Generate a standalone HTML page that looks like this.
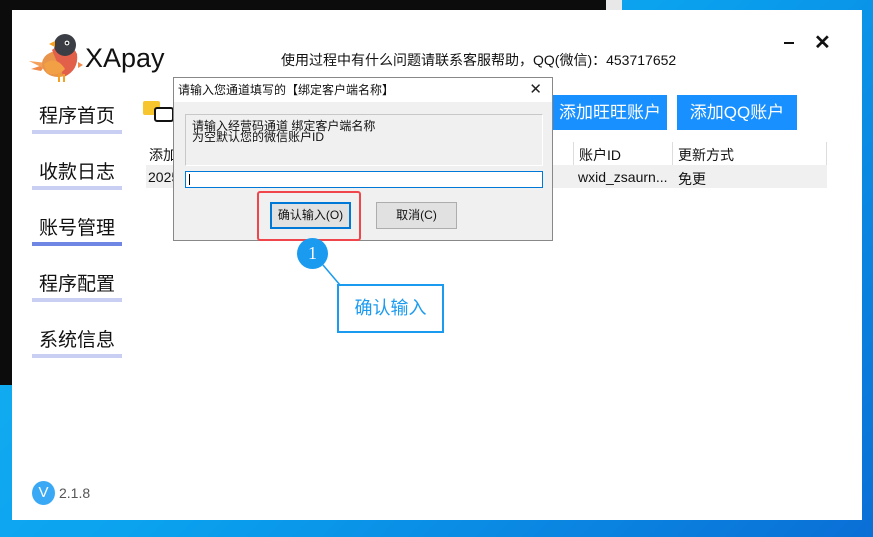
<!DOCTYPE html>
<html><head><meta charset="utf-8"><style>
*{margin:0;padding:0;box-sizing:border-box}
body{width:873px;height:537px;overflow:hidden;position:relative;background:linear-gradient(135deg,#19b8f5 0%,#0aa0ee 50%,#0a6fd6 100%);font-family:"Liberation Sans","Noto Sans CJK SC",sans-serif}
.abs{position:absolute}
.nav{position:absolute;left:32px;width:90px;text-align:center;font-size:19px;color:#111}
.nav .bar{position:absolute;left:0;width:90px;height:4px;background:#c9cff3;top:29px}
</style></head><body>
<div class="abs" style="left:0;top:0;width:606px;height:385px;background:#0c0c0c"></div>
<div class="abs" style="left:606px;top:0;width:16px;height:10px;background:#e8e8e8"></div>
<div class="abs" style="left:12px;top:10px;width:850px;height:510px;background:#fff"></div>

<svg class="abs" style="left:28px;top:30px" width="56" height="52" viewBox="0 0 56 52">
<path d="M3 39 L18 34 L13 41 Z" fill="#f08a4b"/><path d="M1 31 L19 33 L15 38Z" fill="#f5a05a"/>
<ellipse cx="30" cy="34" rx="16" ry="13" fill="#e8944a"/>
<path d="M24 20 Q40 6 49 24 Q51 40 36 47 Q28 30 24 20Z" fill="#e2604a"/>
<circle cx="37" cy="15" r="11" fill="#3b3f45"/>
<circle cx="39" cy="13" r="2.4" fill="#fff"/><circle cx="39" cy="13" r="1.3" fill="#222"/>
<path d="M27 11 L21 14 L27 17Z" fill="#f5a020"/>
<path d="M16 34 Q28 25 37 39 Q30 47 19 43Z" fill="#f2a046"/>
<rect x="30" y="44" width="2" height="8" fill="#f5a020"/><rect x="35" y="44" width="2" height="8" fill="#f5a020"/>
<path d="M50 32 L55 35 L50 38Z" fill="#f08a4b"/>
</svg>
<div class="abs" style="left:85px;top:43px;font-size:27px;color:#111">XApay</div>
<div class="abs" style="left:281px;top:50px;font-size:14px;color:#111">使用过程中有什么问题请联系客服帮助，QQ(微信)：453717652</div>
<div class="abs" style="left:784px;top:42px;width:10px;height:2px;background:#111"></div>
<div class="abs" style="left:814px;top:30px;font-size:20px;font-weight:bold;color:#111">✕</div>

<div class="nav" style="top:101px">程序首页<div class="bar"></div></div>
<div class="nav" style="top:157px">收款日志<div class="bar"></div></div>
<div class="nav" style="top:213px">账号管理<div class="bar" style="background:#6f86e4"></div></div>
<div class="nav" style="top:269px">程序配置<div class="bar"></div></div>
<div class="nav" style="top:325px">系统信息<div class="bar"></div></div>

<div class="abs" style="left:143px;top:101px;width:17px;height:14px;background:#f7c62f;border-radius:2px"></div>
<div class="abs" style="left:154px;top:107px;width:20px;height:15px;border:2.5px solid #111;border-radius:3px;background:#fff"></div>

<div class="abs" style="left:553px;top:95px;width:114px;height:35px;background:#1890ff;color:#fff;font-size:17px;text-align:center;line-height:35px">添加旺旺账户</div>
<div class="abs" style="left:677px;top:95px;width:120px;height:35px;background:#1890ff;color:#fff;font-size:17px;text-align:center;line-height:35px">添加QQ账户</div>

<div class="abs" style="left:149px;top:145px;font-size:14px;color:#111">添加</div>
<div class="abs" style="left:573px;top:142px;width:1px;height:23px;background:#ddd"></div>
<div class="abs" style="left:672px;top:142px;width:1px;height:23px;background:#ddd"></div>
<div class="abs" style="left:826px;top:142px;width:1px;height:23px;background:#ddd"></div>
<div class="abs" style="left:579px;top:145px;font-size:14px;color:#111">账户ID</div>
<div class="abs" style="left:678px;top:145px;font-size:14px;color:#111">更新方式</div>
<div class="abs" style="left:146px;top:165px;width:681px;height:23px;background:#f0f0f0"></div>
<div class="abs" style="left:148px;top:169px;font-size:14px;color:#111">2025</div>
<div class="abs" style="left:578px;top:169px;font-size:14px;color:#111">wxid_zsaurn...</div>
<div class="abs" style="left:678px;top:169px;font-size:14px;color:#111">免更</div>

<!-- dialog -->
<div class="abs" style="left:173px;top:77px;width:380px;height:164px;background:#f0f0f0;border:1px solid #888">
 <div style="height:24px;background:#fff;font-size:12px;line-height:24px;padding-left:4px;color:#111">请输入您通道填写的【绑定客户端名称】</div>
 <div class="abs" style="right:10px;top:2px;font-size:15px;color:#222">✕</div>
 <div class="abs" style="left:11px;top:36px;width:358px;height:52px;border:1px solid #c8c8c8;border-right-color:#fff;border-bottom-color:#fff;font-size:12px;line-height:12px;padding:5px 6px;color:#111"><div style="height:11px">请输入经营码通道 绑定客户端名称</div><div>为空默认您的微信账户ID</div></div>
 <div class="abs" style="left:11px;top:93px;width:358px;height:17px;background:#fff;border:1px solid #0078d7"><div style="margin:2px 3px;width:1px;height:11px;background:#000"></div></div>
 <div class="abs" style="left:96px;top:124px;width:81px;height:27px;background:#e1e1e1;border:2px solid #0078d7;font-size:12px;text-align:center;line-height:23px;color:#111">确认输入(O)</div>
 <div class="abs" style="left:202px;top:124px;width:81px;height:27px;background:#e1e1e1;border:1px solid #adadad;font-size:12px;text-align:center;line-height:25px;color:#111">取消(C)</div>
</div>
<div class="abs" style="left:257px;top:191px;width:104px;height:50px;border:2.5px solid #f0454a;border-radius:3px"></div>

<svg class="abs" style="left:290px;top:235px" width="160" height="102">
<line x1="33" y1="30" x2="50" y2="50" stroke="#1a9bf0" stroke-width="1.5"/>
</svg>
<div class="abs" style="left:297px;top:238px;width:31px;height:31px;border-radius:50%;background:#1a9bf0;color:#fff;font-family:'Liberation Serif',serif;font-size:18px;text-align:center;line-height:31px">1</div>
<div class="abs" style="left:337px;top:284px;width:107px;height:49px;border:2px solid #1a9bf0;background:#fff;color:#1a9bf0;font-size:18px;text-align:center;line-height:45px">确认输入</div>

<div class="abs" style="left:32px;top:481px;width:23px;height:24px;border-radius:50%;background:#3aa9f5;color:#fff;font-size:15px;text-align:center;line-height:24px">V</div>
<div class="abs" style="left:59px;top:485px;font-size:14px;color:#555">2.1.8</div>
</body></html>
